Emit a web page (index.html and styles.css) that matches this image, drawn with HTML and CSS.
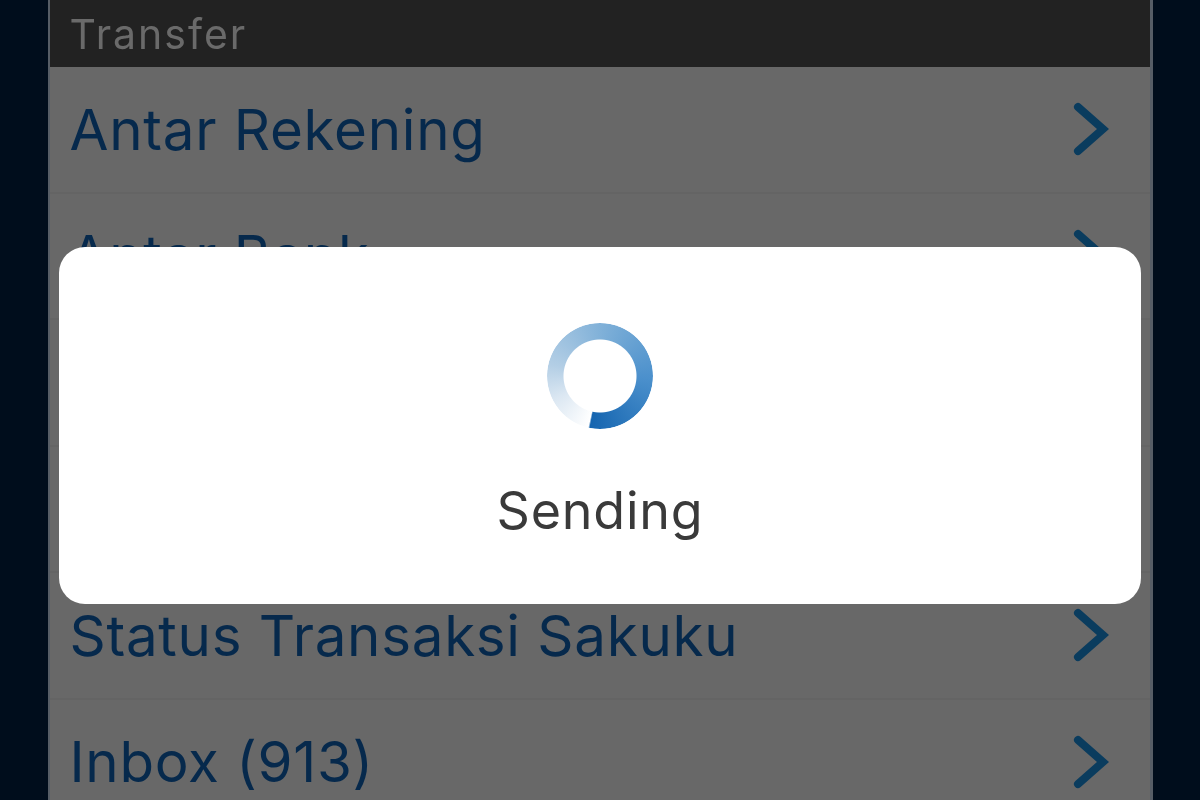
FILE: index.html
```html
<!DOCTYPE html>
<html lang="id">
<head>
<meta charset="utf-8">
<title>Transfer</title>
<link rel="stylesheet" href="styles.css">
</head>
<body>
<main class="phone">
  <header class="section-head"><span class="head-text">Transfer</span></header>
  <ul class="menu">
    <li class="row"><span class="label">Antar Rekening</span><svg class="chev" viewBox="0 0 36 54"><path d="M5 5 L30 27 L5 49"/></svg></li>
    <li class="row"><span class="label">Antar Bank</span><svg class="chev" viewBox="0 0 36 54"><path d="M5 5 L30 27 L5 49"/></svg></li>
    <li class="row"></li>
    <li class="row"></li>
    <li class="row"><span class="label">Status Transaksi Sakuku</span><svg class="chev" viewBox="0 0 36 54"><path d="M5 5 L30 27 L5 49"/></svg></li>
    <li class="row"><span class="label">Inbox (913)</span><svg class="chev" viewBox="0 0 36 54"><path d="M5 5 L30 27 L5 49"/></svg></li>
  </ul>
</main>
<div class="dialog">
  <div class="spinner"></div>
  <p class="message">Sending</p>
</div>
</body>
</html>
```
FILE: styles.css
```css
* { box-sizing: border-box; }
html, body { margin: 0; height: 100%; }
body {
  position: relative;
  height: 800px;
  overflow: hidden;
  background: #000d1c;
  font-family: Inter, "Noto Sans", sans-serif;
}
.phone {
  width: 1105px;
  height: 800px;
  margin: 0 auto;
  background: #686868;
  border-left: 2px solid #565d66;
  border-right: 3px solid #565d66;
  overflow: hidden;
}
.section-head {
  height: 67px;
  background: #222222;
  color: #6a6a6a;
  font-size: 41px;
  line-height: 69px;
  letter-spacing: 2px;
  padding-left: 20px;
}
.head-text { display: inline-block; filter: blur(0.6px); }
.menu { list-style: none; margin: 0; padding: 0; }
.row {
  height: 126.5px;
  display: flex;
  align-items: center;
  justify-content: space-between;
  padding: 0 41px 0 20px;
  border-bottom: 2px solid #646464;
}
.label {
  color: #06294c;
  font-size: 56.5px;
  letter-spacing: 0.7px;
  filter: blur(0.6px);
}
.chev { width: 36px; height: 54px; fill: none; stroke: #0a3c5e; stroke-width: 8; stroke-linecap: round; stroke-linejoin: miter; filter: blur(0.6px); }
.dialog {
  position: absolute;
  left: 59px;
  top: 247px;
  width: 1082px;
  height: 357px;
  background: #ffffff;
  border-radius: 26px;
  display: flex;
  flex-direction: column;
  align-items: center;
  padding-top: 76px;
}
.spinner {
  width: 106px;
  height: 106px;
  border-radius: 50%;
  background: conic-gradient(from 193deg, #ffffff 0deg, #dbe7f2 50deg, #b3cee5 90deg, #7fb0d8 170deg, #4b90cc 260deg, #1565b0 358deg, #ffffff 360deg);
  -webkit-mask: radial-gradient(circle, transparent 36px, #000 37px);
  mask: radial-gradient(circle, transparent 36px, #000 37px);
  filter: blur(0.6px);
}
.message {
  margin: 52px 0 0;
  color: #3a3a3a;
  font-size: 52px;
  line-height: 60px;
  letter-spacing: 0.8px;
  filter: blur(0.5px);
}
```
